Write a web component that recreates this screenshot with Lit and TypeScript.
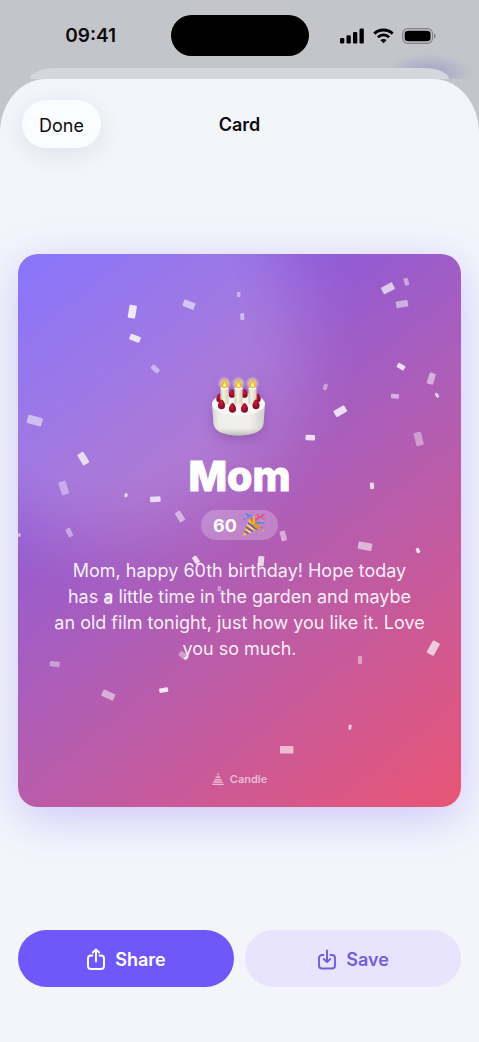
import { LitElement, html, css, svg } from "lit";
import { customElement } from "lit/decorators.js";

type Piece = [x: number, y: number, w: number, h: number, angle: number, opacity: number];

const CONFETTI: Piece[] = [
  [114.3, 57.7, 7.5, 13, 9, 0.85], [171, 50.7, 12, 7, 22, 0.55], [117, 84.3, 11, 6, 21, 0.8],
  [137.3, 115, 9, 5, 42, 0.45], [16.7, 166.7, 15, 8.5, 16, 0.52], [220.7, 40.5, 3.5, 5, 0, 0.45],
  [370, 34.3, 12.5, 7.5, -28, 0.68], [388.3, 27.7, 4.5, 7.5, -15, 0.45], [384, 50, 12, 6.5, -9, 0.5],
  [224.3, 62.7, 4, 7, -3, 0.5], [383, 112.7, 8, 5, 32, 0.8], [413.3, 124.7, 6.5, 11.5, 17, 0.5],
  [307.3, 133, 4, 6.5, 20, 0.4], [377, 142.3, 8, 4.5, 4, 0.5], [419, 141.3, 3, 5, -30, 0.7],
  [322.3, 157.3, 12.5, 7, -30, 0.8], [292.3, 183.7, 9.5, 5.5, 3, 0.8], [400.7, 185, 7.5, 13.5, -14, 0.4],
  [354, 232, 4, 6.5, -5, 0.75], [265.3, 282, 5.5, 10, -15, 0.5], [347, 292.3, 14, 7.5, 10, 0.55],
  [400, 296.7, 3.5, 5, -25, 0.85], [243, 307.2, 6, 10, 5, 0.75], [65.3, 204.7, 7, 12.5, -31, 0.75],
  [45.7, 234, 7.5, 13.5, -17, 0.4], [108, 241.3, 3, 4, 20, 0.7], [137.3, 245.3, 10.5, 5.5, -4, 0.75],
  [162, 262.7, 6, 11, -32, 0.5], [51.3, 278.7, 5, 9, -25, 0.42], [0.7, 281, 4, 3.5, 30, 0.5],
  [178, 306, 5, 8, -35, 0.8], [201.3, 335, 3.5, 5, 0, 0.4], [90.7, 345, 7, 11, 5, 0.4],
  [36.7, 410.3, 10, 5.5, 7, 0.4], [90.3, 441.3, 13, 7, 25, 0.5], [145.7, 436.3, 9, 4.5, -10, 0.85],
  [165.7, 402, 10, 5.5, 38, 0.4], [415.3, 394.3, 8, 14, 29, 0.68], [342, 406.3, 4, 8, 0, 0.45],
  [332, 473.3, 3, 5, 10, 0.7], [268.7, 496, 13.5, 7.5, 0, 0.6],
];

const MESSAGE = [
  "Mom, happy 60th birthday! Hope today",
  "has a little time in the garden and maybe",
  "an old film tonight, just how you like it. Love",
  "you so much.",
].join("\n");

const berry = (x: number, y: number, s = 1) => svg`
  <g transform="translate(${x} ${y}) scale(${s})">
    <path d="M0-4.6C1.6-4.2 3.2-1.4 3.2.9A3.2 3.4 0 0 1-3.2.9C-3.2-1.4-1.6-4.2 0-4.6Z" fill="url(#berry)"/>
  </g>`;

const candle = (x: number) => svg`
  <g transform="translate(${x} 2)">
    <circle cx="0" cy="7.500" r="7.500" fill="url(#glow)"/>
    <rect x="-4.100" y="11.400" width="8.200" height="17" rx="2" fill="url(#wax)"/>
    <ellipse cx="0" cy="12.300" rx="4" ry="1.400" fill="#fffdf0"/>
    <path d="M0 2.800C1.500 5.400 3.200 7.200 3.200 9.200A3.200 3 0 0 1-3.200 9.200C-3.200 7.200-1.500 5.400 0 2.800Z" fill="#e3bd2f"/>
    <path d="M0 6C.8 7.400 1.500 8.500 1.500 9.700A1.500 1.600 0 0 1-1.500 9.700C-1.500 8.500-.8 7.400 0 6Z" fill="#fbee8b"/>
  </g>`;

@customElement("birthday-card")
export class BirthdayCard extends LitElement {
  static styles = css`
    :host { display: block; }
    .card {
      position: relative;
      box-sizing: border-box;
      aspect-ratio: 4 / 5;
      display: flex;
      flex-direction: column;
      align-items: center;
      padding: 12px 24px 19px;
      border-radius: 20px;
      overflow: hidden;
      color: #fff;
      text-align: center;
      background:
        radial-gradient(circle at 19% 15%, rgba(255,255,255,.18) 0, rgba(255,255,255,.18) 145px, rgba(255,255,255,.15) 170px, rgba(255,255,255,.09) 198px, rgba(255,255,255,.03) 228px, rgba(255,255,255,0) 255px),
        linear-gradient(141deg, #6e57fb 0%, #ac5eb9 50%, #e95575 100%);
    }
    .shadow {
      border-radius: 20px;
      box-shadow: 0 11px 46px rgba(110, 87, 251, .29);
    }
    .confetti { position: absolute; inset: 0; width: 100%; height: 100%; fill: #fff; }
    .body {
      position: relative;
      flex: 1;
      display: flex;
      flex-direction: column;
      align-items: center;
      justify-content: center;
    }
    .cake { width: 60px; height: 64px; overflow: visible; filter: drop-shadow(0 4px 6px rgba(60, 10, 90, .22)); }
    h2 {
      margin: 12px 0 8px;
      font-size: 41px;
      line-height: 52px;
      font-weight: 800;
      -webkit-text-stroke: 1px #fff;
      stroke-linejoin: round;
    }
    .age {
      display: flex;
      align-items: center;
      gap: 4px;
      height: 30px;
      padding: 0 12px;
      border-radius: 15px;
      background: rgba(255, 255, 255, .23);
      font-size: 18px;
      font-weight: 700;
    }
    .age svg { width: 25px; height: 24px; }
    p { margin: 18px 0 0; font-size: 18px; line-height: 26px; color: rgba(255,255,255,.93); white-space: pre-line; }
    .brand {
      position: relative;
      display: flex;
      align-items: center;
      gap: 6px;
      font-size: 11px;
      line-height: 18px;
      font-weight: 600;
      color: rgba(255, 255, 255, .6);
    }
    .brand svg { width: 12px; height: 12px; fill: currentColor; }
  `;

  render() {
    return html`
      <div class="shadow">
        <article class="card">
          <svg class="confetti" viewBox="0 0 443 554" preserveAspectRatio="none" aria-hidden="true">
            ${CONFETTI.map(([x, y, w, h, a, o]) => svg`
              <rect x=${-w / 2} y=${-h / 2} width=${w} height=${h} rx="1" opacity=${o}
                transform="translate(${x} ${y}) rotate(${a})"/>`)}
          </svg>
          <div class="body">
            <svg class="cake" viewBox="0 0 60 64" role="img" aria-label="Birthday cake">
              <defs>
                <linearGradient id="side" x1="0" x2="1"><stop offset="0" stop-color="#d6d4cf"/><stop offset=".14" stop-color="#eeeeea"/><stop offset=".7" stop-color="#f1f0ed"/><stop offset="1" stop-color="#d2cfcb"/></linearGradient>
                <linearGradient id="base" x1="0" x2="0" y1="0" y2="1"><stop offset=".75" stop-color="#b9b7b0" stop-opacity="0"/><stop offset="1" stop-color="#a5a39c" stop-opacity=".7"/></linearGradient>
                <linearGradient id="wax" x1="0" x2="1"><stop offset="0" stop-color="#cfc9b4"/><stop offset=".4" stop-color="#f7f3e2"/><stop offset="1" stop-color="#d1cbb7"/></linearGradient>
                <radialGradient id="berry" cx=".4" cy=".35"><stop offset="0" stop-color="#c81f40"/><stop offset="1" stop-color="#8c0c29"/></radialGradient>
                <radialGradient id="glow"><stop offset=".3" stop-color="#fff2b0" stop-opacity=".75"/><stop offset="1" stop-color="#ffe7b0" stop-opacity="0"/></radialGradient>
              </defs>
              <path d="M3 31L4.500 50C5 56.500 14 61.500 29.500 61.500S54 56.500 54.500 50L56 31Z" fill="url(#side)"/>
              <path d="M3 31L4.500 50C5 56.500 14 61.500 29.500 61.500S54 56.500 54.500 50L56 31Z" fill="url(#base)"/>
              <ellipse cx="29.500" cy="30" rx="26.500" ry="11.500" fill="#f7f6f4"/>
              ${berry(23, 19.500)}${berry(35.500, 19.500)}${berry(10.500, 24)}${berry(48.500, 24)}
              ${candle(15.500)}${candle(29.500)}${candle(43.500)}
              ${berry(12.500, 30.500, 1.1)}${berry(23.500, 34, 1.1)}${berry(35.500, 34, 1.1)}${berry(47, 30.500, 1.1)}
            </svg>
            <h2>Mom</h2>
            <div class="age">
              <span>60</span>
              <svg viewBox="0 0 25 24" role="img" aria-label="Party popper">
                <defs><linearGradient id="cone" x1="0" x2="1"><stop offset="0" stop-color="#f1b73c"/><stop offset=".5" stop-color="#ffe27a"/><stop offset="1" stop-color="#e09a26"/></linearGradient></defs>
                <path d="M2 21.500 8.600 5.500C13 7 17.500 11.500 18.800 15.600L3.500 22.600C2.500 23 1.600 22.500 2 21.500Z" fill="url(#cone)"/>
                <path d="M3.700 17.200 8.600 20.300 6.600 21.200 3 19ZM5.500 13 13.200 18.100 11 19.200 4.700 15ZM7.300 8.800 17 16.400 15 17.300 6.500 10.800Z" fill="#7c59a8"/>
                <ellipse cx="13.800" cy="10.600" rx="2.400" ry="7" transform="rotate(-45 13.800 10.600)" fill="#d9962c"/>
                <path d="M12.500 11C13.500 8 12 6 13.500 3" fill="none" stroke="#f1bd3e" stroke-width="1.600"/>
                <path d="M4.500 1C7.500 1 8 3 6.500 5M2.500 5.500 4 7M10 1.500 9 4" fill="none" stroke="#4b8af0" stroke-width="1.700"/>
                <path d="M15 9.500C19 11.500 19.500 8.500 23.500 10" fill="none" stroke="#4a90e8" stroke-width="1.900"/>
                <path d="M14 7C17.500 7 16 3.500 19 4S20.500 1 23.500 1.500" fill="none" stroke="#e44c7e" stroke-width="1.900"/>
                <g fill="#e4517f"><circle cx="10.500" cy="5.500" r="1"/><circle cx="20.500" cy="14.500" r="1.100"/><circle cx="16.500" cy="1.800" r="1"/><circle cx="22.500" cy="5.800" r="1"/></g>
                <g fill="#efb53e"><circle cx="21" cy="7.600" r=".9"/><circle cx="22" cy="18" r=".9"/></g>
              </svg>
            </div>
            <p>${MESSAGE}</p>
          </div>
          <div class="brand">
            <svg viewBox="0 0 12 12" aria-hidden="true">
              <path d="M6 0C6.500.7 6.800 1 6.800 1.500A.8.8 0 0 1 5.200 1.500C5.200 1 5.500.7 6 0ZM5.600 2.400H6.400V3.600H5.600ZM4.200 3.600H7.800Q8.500 3.600 8.500 5H3.500Q3.500 3.600 4.200 3.600ZM3.200 5.900H8.800Q9.700 5.900 9.700 7.400H2.300Q2.300 5.900 3.200 5.900ZM2 8.300H10Q11 8.300 11 9.800H1Q1 8.300 2 8.300ZM.3 10.700H11.700V12H.3Z"/>
            </svg>
            <span>Candle</span>
          </div>
        </article>
      </div>
    `;
  }
}

@customElement("app-root")
export class AppRoot extends LitElement {
  static styles = css`
    :host {
      display: flex;
      flex-direction: column;
      min-height: 100vh;
      background: #c4c5ca;
      color: #0b0b0f;
      font-family: Inter, "Liberation Sans", sans-serif;
    }
    .backdrop {
      display: flex;
      flex-direction: column;
      background: radial-gradient(ellipse 44px 20px at calc(100% - 50px) calc(100% - 6px), rgba(122, 108, 200, .42), transparent);
    }
    .status {
      display: grid;
      grid-template-columns: 1fr auto 1fr;
      align-items: center;
      padding: 15px 0 12px;
    }
    .time { justify-self: center; font-size: 19px; font-weight: 600; padding-left: 11px; }
    .island { width: 138px; height: 41px; border-radius: 21px; background: #000; }
    .signals { display: flex; align-items: center; justify-self: center; gap: 8px; padding-right: 13px; }
    .signals svg { display: block; }
    .under {
      height: 11px;
      margin: 0 30px;
      border-radius: 26px 26px 0 0 / 11px 11px 0 0;
      background: #d6d7dc;
    }
    .sheet {
      flex: 1;
      display: flex;
      flex-direction: column;
      box-sizing: border-box;
      padding: 21px 18px 55px;
      border-radius: 46px 46px 0 0 / 54px 54px 0 0;
      background: #f4f5fb;
    }
    header {
      display: grid;
      grid-template-columns: 1fr auto 1fr;
      align-items: center;
      padding: 0 4px 3px;
    }
    button { font: inherit; border: 0; cursor: pointer; }
    .done {
      justify-self: start;
      height: 48px;
      padding: 2px 17px 0;
      border-radius: 24px;
      background: #fbfcff;
      color: #0b0b0f;
      font-size: 18px;
      box-shadow: 0 6px 26px rgba(20, 20, 50, .09);
    }
    h1 { margin: 0; padding-top: 2px; font-size: 18px; line-height: 24px; font-weight: 600; }
    main { flex: 1; display: flex; flex-direction: column; justify-content: center; }
    footer { display: grid; grid-template-columns: 1fr 1fr; gap: 11px; padding-top: 20px; }
    .action {
      display: flex;
      align-items: center;
      justify-content: center;
      gap: 9px;
      height: 57px;
      padding: 2px 0 0;
      border-radius: 29px;
      font-size: 18px;
      font-weight: 600;
    }
    .action svg { width: 20px; height: 24px; fill: none; stroke: currentColor; stroke-width: 1.9; stroke-linecap: round; stroke-linejoin: round; }
    .share { background: #6f57f9; color: #fff; }
    .save { background: #e8e4fd; color: #745dd8; }
  `;

  render() {
    return html`
      <div class="backdrop">
        <div class="status">
          <span class="time">09:41</span>
          <div class="island"></div>
          <div class="signals" role="img" aria-label="Signal, Wi-Fi and battery full">
            <svg width="26" height="16" viewBox="0 0 26 16">
              <rect x="1" y="10" width="4.300" height="5.500" rx="1.300"/><rect x="7.500" y="7.300" width="4.300" height="8.200" rx="1.300"/>
              <rect x="14" y="4" width="4.300" height="11.500" rx="1.300"/><rect x="20.500" y=".5" width="4.300" height="15" rx="1.300"/>
            </svg>
            <svg width="21" height="16" viewBox="0 0 21 16">
              <path d="M1.300 5.600C6.400.7 14.600.7 19.700 5.600" fill="none" stroke="#000" stroke-width="2.900"/>
              <path d="M4.900 9.200C8 6.200 13 6.200 16.100 9.200" fill="none" stroke="#000" stroke-width="2.700"/>
              <path d="M10.500 15.300 7.300 12.100C9.100 10.500 11.900 10.500 13.700 12.100Z"/>
            </svg>
            <svg width="34" height="16" viewBox="0 0 34 16">
              <rect x=".7" y=".7" width="29.800" height="14.600" rx="5" fill="none" stroke="#808187" stroke-width="1.200"/>
              <rect x="2.700" y="2.700" width="25.800" height="10.600" rx="3.300"/>
              <path d="M32 5.400C34.200 6 34.200 10 32 10.600Z" fill="#808187"/>
            </svg>
          </div>
        </div>
        <div class="under"></div>
      </div>
      <section class="sheet" aria-labelledby="title">
        <header>
          <button class="done" type="button">Done</button>
          <h1 id="title">Card</h1>
        </header>
        <main><birthday-card></birthday-card></main>
        <footer>
          <button class="action share" type="button">
            <svg viewBox="0 0 20 24" aria-hidden="true"><path d="M6.500 7.500H5A3 3 0 0 0 2 10.500V18A3 3 0 0 0 5 21H15A3 3 0 0 0 18 18V10.500A3 3 0 0 0 15 7.500H13.500M10 13.500V1.500M6.800 4.500 10 1.400 13.200 4.500"/></svg>
            Share
          </button>
          <button class="action save" type="button">
            <svg viewBox="0 0 20 24" aria-hidden="true"><path d="M6.500 7H5A3 3 0 0 0 2 10V17.500A3 3 0 0 0 5 20.500H15A3 3 0 0 0 18 17.500V10A3 3 0 0 0 15 7H13.500M10 2.500V14M6.800 11 10 14.100 13.200 11"/></svg>
            Save
          </button>
        </footer>
      </section>
    `;
  }
}
